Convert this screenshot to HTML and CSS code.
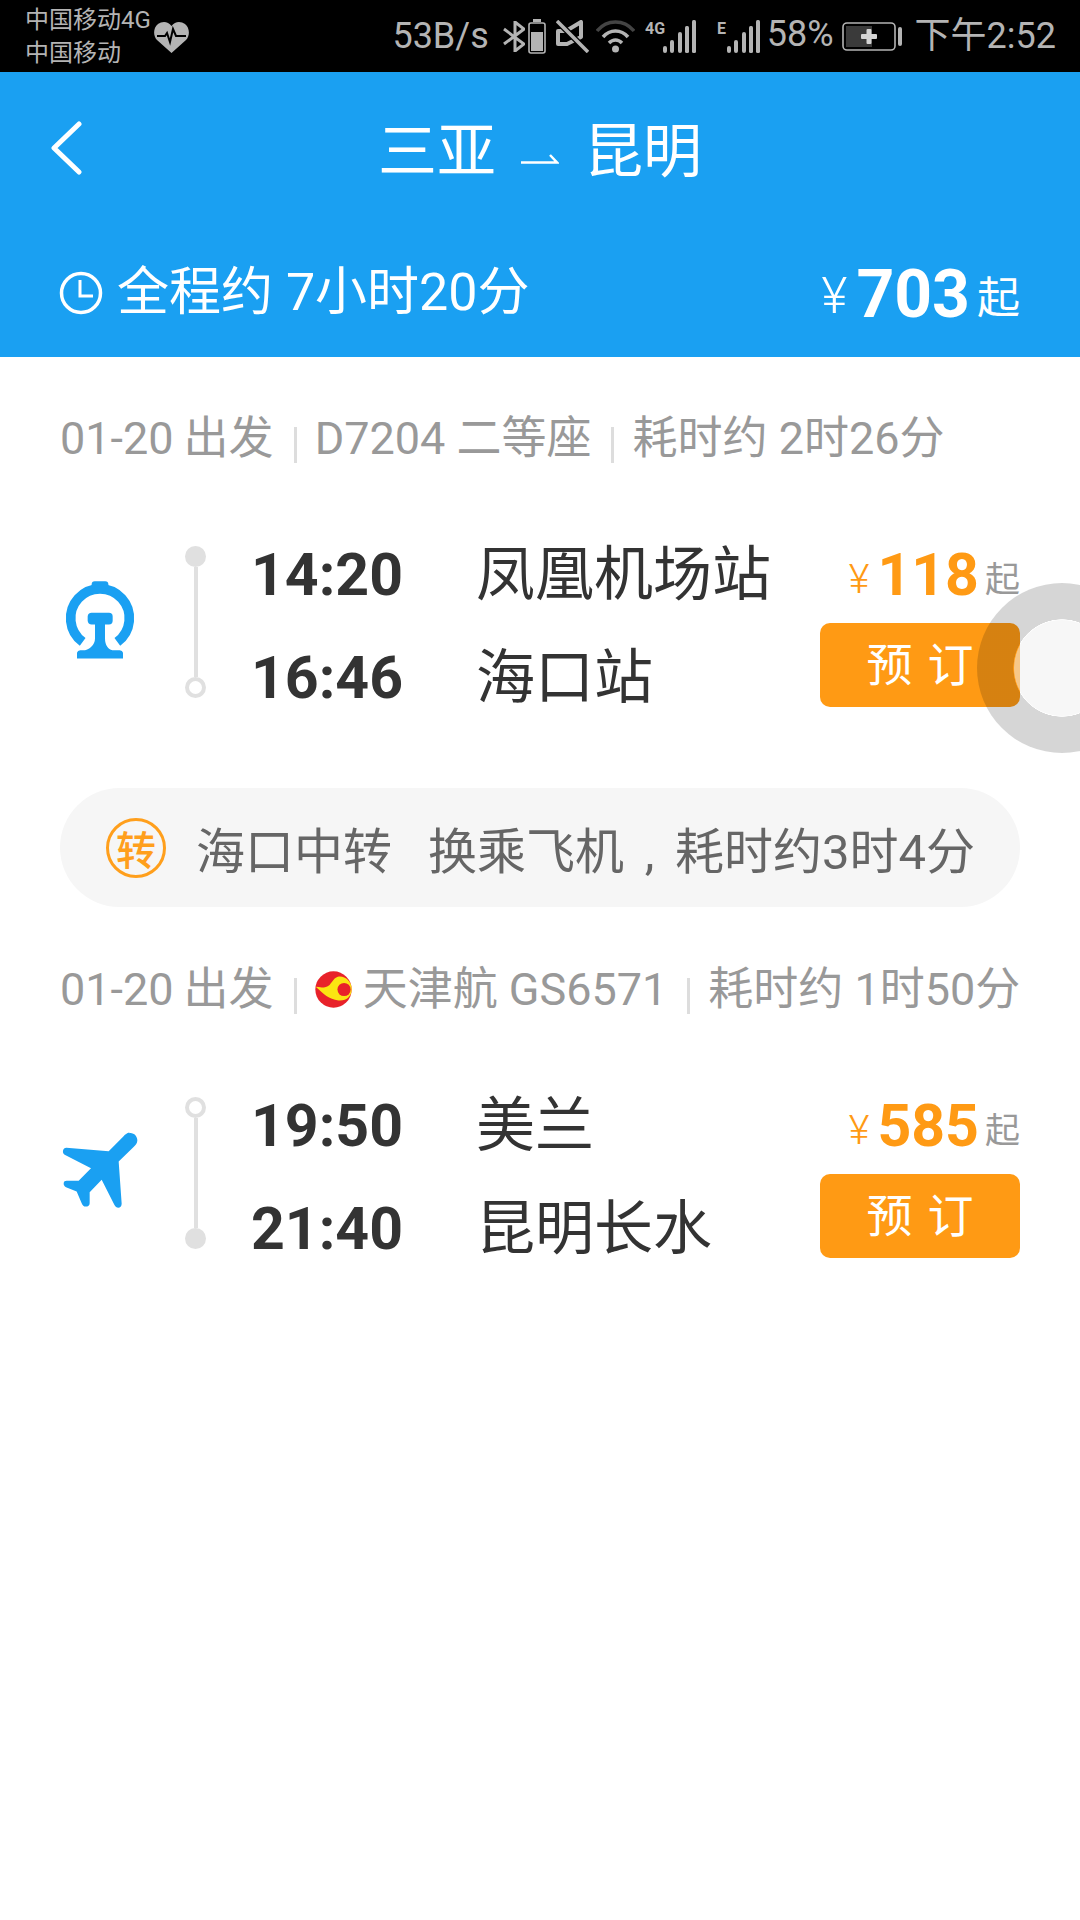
FILE: index.html
```html
<!DOCTYPE html>
<html lang="zh-CN">
<head>
<meta charset="utf-8">
<title>三亚 → 昆明</title>
<link rel="stylesheet" href="styles.css">
</head>
<body>
<div class="page">
  <div class="status">
    <div class="carriers"><span>中国移动4G</span><span>中国移动</span></div>
    <svg class="i-heart" viewBox="0 0 35 32"><path d="M17.500 32 3 19C-1 15-1 7 4 3c4-3 10-3 13.500 2C21-.1 27 0 31 3c5 4 5 12 1 16Z" fill="#b4b4b4"/><path d="M3 15h8l2-3 3 9 3-13 3 7h10" fill="none" stroke="#000" stroke-width="2"/></svg>
    <div class="status-right">
      <span class="speed">53B/s</span>
      <svg class="i-bt" viewBox="0 0 22 31"><path d="M1 8l20 15-9 7V1l9 7L1 23" fill="none" stroke="#b4b4b4" stroke-width="3"/></svg>
      <svg class="i-mini" viewBox="0 0 18 35"><rect x="1" y="4" width="16" height="30" rx="2" fill="none" stroke="#b4b4b4" stroke-width="1.600"/><rect x="5" y="0" width="8" height="3" fill="#b4b4b4"/><rect x="3" y="13" width="12" height="19" fill="#b4b4b4"/></svg>
      <svg class="i-mute" viewBox="0 0 33 33"><path d="M25 2v15L11 24H2V11h8Z" fill="none" stroke="#b4b4b4" stroke-width="4" stroke-linejoin="round"/><path d="M1 1l31 31" stroke="#000" stroke-width="6"/><path d="M1 1l31 31" stroke="#b4b4b4" stroke-width="3.500"/></svg>
      <svg class="i-wifi" viewBox="0 0 39 33"><path d="M1 11C11 -1 28 -1 38 11" fill="none" stroke="#444" stroke-width="3.500"/><path d="M7 17c7-8 18-8 25 0M13 23c4-4 9-4 13 0" fill="none" stroke="#b4b4b4" stroke-width="3.500"/><circle cx="19.500" cy="29" r="3.500" fill="#b4b4b4"/></svg>
      <svg class="i-sig" viewBox="0 0 52 33"><text x="0" y="14" class="sig-label">4G</text><g fill="#b4b4b4"><rect x="18" y="26" width="4" height="7" rx="2"/><rect x="25" y="20" width="4" height="13" rx="2"/><rect x="33" y="12" width="4" height="21" rx="2"/><rect x="40" y="6" width="4" height="27" rx="1.500"/><rect x="47" y="0" width="4" height="33" rx="1.500"/></g></svg>
      <svg class="i-sig2" viewBox="0 0 44 33"><text x="0" y="14" class="sig-label">E</text><g fill="#b4b4b4"><rect x="10" y="26" width="4" height="7" rx="2"/><rect x="17" y="20" width="4" height="13" rx="2"/><rect x="25" y="12" width="4" height="21" rx="2"/><rect x="32" y="6" width="4" height="27" rx="1.500"/><rect x="39" y="0" width="4" height="33" rx="1.500"/></g></svg>
      <span class="pct">58%</span>
      <svg class="i-batt" viewBox="0 0 60 29"><rect x="1" y="1" width="52" height="27" rx="4" fill="none" stroke="#b4b4b4" stroke-width="1.600"/><rect x="4" y="4" width="26" height="21" fill="#3a3a3a"/><rect x="19" y="12" width="16" height="5" rx="1" fill="#d4d4d4"/><rect x="24.500" y="7" width="5" height="15" rx="1" fill="#d4d4d4"/><rect x="56" y="5" width="4" height="19" rx="2" fill="#b4b4b4"/></svg>
      <span class="clock">下午2:52</span>
    </div>
  </div>

  <header class="head">
    <div class="nav">
      <svg class="back" viewBox="0 0 32 54"><path d="M29 3 4 27l25 24" fill="none" stroke="#fff" stroke-width="5" stroke-linecap="round" stroke-linejoin="round"/></svg>
      <div class="title"><span>三亚</span><svg class="title-arrow" viewBox="0 0 38 12"><path d="M0 10.500h36L29 3" fill="none" stroke="#fff" stroke-width="2.500"/></svg><span>昆明</span></div>
    </div>
    <div class="summary">
      <svg class="i-clock" viewBox="0 0 44 44"><circle cx="22" cy="22" r="19.500" fill="none" stroke="#fff" stroke-width="3.500"/><path d="M21 9v16h13" fill="none" stroke="#fff" stroke-width="3"/></svg>
      <span class="duration">全程约 7小时20分</span>
      <span class="total"><span class="total-yen">¥</span><b>703</b><span class="total-from">起</span></span>
    </div>
  </header>

  <main class="main">
    <section class="leg">
      <div class="meta">
        <span class="meta-date">01-20</span><span>出发</span><i class="sep"></i>
        <span>D7204 二等座</span><i class="sep"></i>
        <span>耗时约 2时26分</span>
      </div>
      <div class="route">
        <svg class="mode" viewBox="60 140 240 260"><path d="M128 337A88 88 0 1 1 232 337" fill="none" stroke="#1aa0f2" stroke-width="29"/><rect x="155" y="155" width="50" height="22" rx="9" fill="#1aa0f2"/><path d="M155 250h52a11 11 0 0 1 11 11v13a11 11 0 0 1-11 11h-12v42c0 20 10 33 22 35h22a10 10 0 0 1 10 8v17H111v-17a10 10 0 0 1 10-8h14c12-2 30-15 30-35v-42h-10a12 12 0 0 1-12-11v-13a12 12 0 0 1 12-11Z" fill="#1aa0f2"/></svg>
        <div class="line"><i class="dot"></i><i class="bar"></i><i class="dot hollow"></i></div>
        <div class="stops">
          <div class="stop"><b>14:20</b><span>凤凰机场站</span></div>
          <div class="stop"><b>16:46</b><span>海口站</span></div>
        </div>
        <div class="buy">
          <div class="price"><span class="yen">¥</span><b>118</b><span class="from">起</span></div>
          <div class="btn">预订</div>
        </div>
      </div>
    </section>

    <div class="transfer">
      <span class="badge">转</span>
      <span class="t-place">海口中转</span>
      <span>换乘飞机<span class="comma">,</span>耗时约3时4分</span>
    </div>

    <section class="leg leg-2">
      <div class="meta">
        <span class="meta-date">01-20</span><span>出发</span><i class="sep"></i>
        <svg class="airline" viewBox="0 0 112 110"><circle cx="56" cy="55" r="55" fill="#e8222a"/><path d="M2 47c16 2 30 4 42-6C54 32 58 18 72 16c20-2 38 14 39 36 1 24-16 38-40 36C42 86 26 68 2 47Z" fill="#fbe512"/><circle cx="88" cy="55" r="20" fill="#e8222a"/></svg>
        <span>天津航 GS6571</span><i class="sep"></i>
        <span>耗时约 1时50分</span>
      </div>
      <div class="route">
        <svg class="mode" viewBox="60 140 240 260"><path d="M268 158c14-2 24 10 24 22 0 8-6 15-12 20l-44 43 9 127c0 8-5 12-10 12s-9-3-12-9l-38-75-36 37v33c0 7-5 10-12 10-6 0-9-3-12-10l-15-35-32-13c-5-3-7-6-7-11 0-6 4-8 9-8h36l37-38-79-40c-4-3-6-7-5-12s5-9 10-9l127 10 44-44c5-6 11-10 18-12Z" fill="#1aa0f2"/></svg>
        <div class="line"><i class="dot hollow"></i><i class="bar"></i><i class="dot"></i></div>
        <div class="stops">
          <div class="stop"><b>19:50</b><span>美兰</span></div>
          <div class="stop"><b>21:40</b><span>昆明长水</span></div>
        </div>
        <div class="buy">
          <div class="price"><span class="yen">¥</span><b>585</b><span class="from">起</span></div>
          <div class="btn">预订</div>
        </div>
      </div>
    </section>
  </main>

  <div class="float-ball"><i class="float-core"></i></div>
</div>
</body>
</html>
```

FILE: styles.css
```css
* { box-sizing: border-box; }
html, body { margin: 0; padding: 0; }
body {
  width: 1080px;
  height: 1920px;
  overflow: hidden;
  background: #fff;
  font-family: Roboto, "Noto Sans CJK SC", sans-serif;
}
i { font-style: normal; display: block; }
svg { display: block; flex: none; }
.page { position: relative; width: 1080px; height: 1920px; overflow: hidden; }

/* status bar */
.status {
  height: 72px;
  background: #000;
  color: #b4b4b4;
  display: flex;
  align-items: center;
  padding: 0 24px 0 25px;
}
.carriers {
  display: flex;
  flex-direction: column;
  gap: 6px;
  font-size: 24px;
  line-height: 27px;
  width: 129px;
  padding-top: 2px;
}
.i-heart { width: 35px; height: 32px; margin-bottom: -2px; }
.status-right { margin-left: auto; display: flex; align-items: center; height: 72px; }
.speed, .pct, .clock { font-size: 36px; line-height: 40px; }
.clock { margin-left: 13px; }
.pct { margin-left: 6px; margin-top: -4px; }
.i-bt { width: 22px; height: 31px; margin-left: 14px; }
.i-mini { width: 18px; height: 35px; margin-left: 3px; }
.i-mute { width: 33px; height: 33px; margin-left: 10px; }
.i-wifi { width: 39px; height: 33px; margin-left: 7px; }
.i-sig { width: 52px; height: 33px; margin-left: 10px; }
.i-sig2 { width: 44px; height: 33px; margin-left: 20px; }
.i-batt { width: 60px; height: 29px; margin-left: 8px; }
.sig-label { font-family: "Liberation Sans Narrow", Roboto, sans-serif; font-size: 16px; font-weight: 700; fill: #b4b4b4; }

/* blue header */
.head { height: 285px; background: #1aa0f2; color: #fff; padding: 0 60px; display: flex; flex-direction: column; }
.nav { position: relative; height: 160px; display: flex; align-items: center; justify-content: center; }
.back { width: 32px; height: 54px; position: absolute; left: -10px; top: 49px; }
.title { display: flex; align-items: center; gap: 25px; font-size: 59px; line-height: 70px; }
.title-arrow { width: 38px; height: 12px; margin-top: 12px; }
.summary { display: flex; align-items: center; height: 125px; }
.i-clock { width: 44px; height: 44px; margin-right: 14px; margin-left: -1px; margin-top: -4px; }
.duration { font-size: 52px; line-height: 60px; margin-top: -4px; }
.total { margin-left: auto; display: flex; align-items: baseline; }
.total-yen { font-size: 50px; font-weight: 300; margin-right: 9px; transform: translateY(-4px); }
.total b { font-size: 66px; line-height: 70px; font-weight: 700; }
.total-from { font-size: 43px; margin-left: 7px; transform: translateY(-4px); }

/* legs */
.main { padding: 0 60px; }
.leg { padding-top: 54px; }
.leg-2 { padding-top: 55px; }
.meta { display: flex; align-items: baseline; height: 56px; font-size: 45px; line-height: 56px; color: #999; white-space: nowrap; }
.meta-date { margin-right: 10px; }
.sep { flex: none; width: 3px; height: 36px; background: #ddd; margin: 0 18px 0 20px; align-self: center; transform: translateY(6px); }
.airline { width: 37px; height: 37px; margin-right: 11px; align-self: center; transform: translateY(-1px); }
.route { display: flex; height: 206px; margin-top: 55px; }
.mode { width: 80px; height: 87px; margin-top: 54px; }
.line { width: 21px; height: 152px; margin: 24px 0 0 45px; display: flex; flex-direction: column; align-items: center; }
.dot { width: 21px; height: 21px; border-radius: 50%; background: #e0e0e0; flex: none; }
.dot.hollow { background: #fff; border: 4px solid #e0e0e0; }
.bar { width: 4px; flex: 1; background: #e0e0e0; }
.stops { margin-left: 45px; display: flex; flex-direction: column; }
.stop { height: 103px; line-height: 105px; display: flex; align-items: baseline; color: #333; white-space: nowrap; }
.stop b { width: 225px; font-size: 59px; font-weight: 700; }
.stop span { font-size: 59px; }
.buy { margin-left: auto; width: 200px; display: flex; flex-direction: column; }
.price { height: 101px; display: flex; align-items: baseline; justify-content: flex-end; padding-top: 21px; color: #ff9a14; white-space: nowrap; }
.yen { font-size: 40px; font-weight: 300; margin-right: 8px; transform: translateY(-2px); }
.price b { font-size: 59px; line-height: 64px; font-weight: 700; }
.from { font-size: 35px; color: #999; margin-left: 6px; transform: translateY(-3px); }
.btn {
  height: 84px;
  background: #ff9a14;
  border-radius: 10px;
  color: #fff;
  font-size: 46px;
  line-height: 84px;
  letter-spacing: 15px;
  padding-left: 15px;
  display: flex;
  align-items: flex-start;
  justify-content: center;
}

/* transfer pill */
.transfer {
  height: 119px;
  margin-top: 60px;
  background: #f6f6f6;
  border-radius: 60px;
  padding-left: 46px;
  display: flex;
  align-items: center;
  color: #666;
  font-size: 49px;
  white-space: nowrap;
}
.badge {
  width: 60px;
  height: 60px;
  border: 3px solid #ff9f1c;
  border-radius: 50%;
  color: #ff9f1c;
  font-size: 40px;
  font-weight: 500;
  display: flex;
  align-items: center;
  justify-content: center;
  margin-right: 30px;
}
.t-place { margin-right: 36px; }
.comma { display: inline-block; width: 51px; text-align: center; }

/* floating assistive ball over the page */
.float-ball {
  position: absolute;
  left: 977px;
  top: 583px;
  width: 170px;
  height: 170px;
  border-radius: 50%;
  background: radial-gradient(circle closest-side, transparent 57%, rgba(0,0,0,.16) 57.500%);
  display: flex;
  align-items: center;
  justify-content: center;
}
.float-core { width: 96px; height: 96px; border-radius: 50%; background: rgba(239,239,239,.53); }
```
